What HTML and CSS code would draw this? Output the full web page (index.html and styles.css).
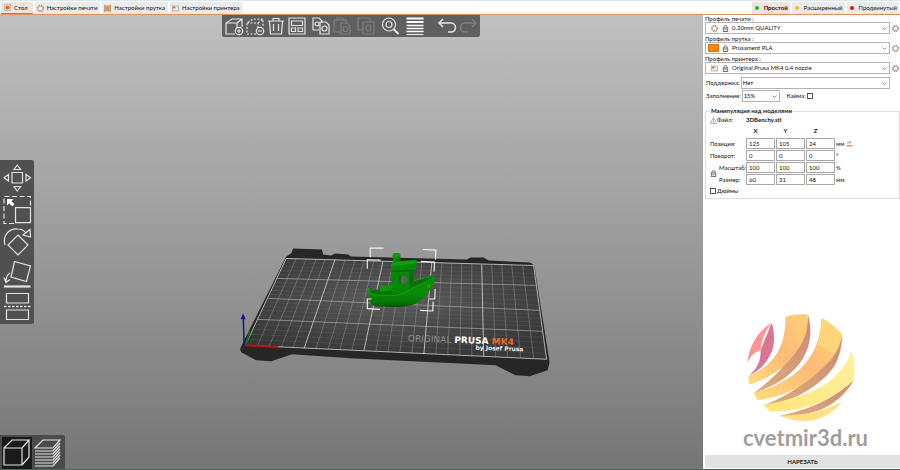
FILE: index.html
```
<!DOCTYPE html>
<html lang="ru">
<head>
<meta charset="utf-8">
<title>Стол</title>
<link rel="stylesheet" href="styles.css">
</head>
<body>
<svg class="defs" aria-hidden="true">
  <defs>
    <symbol id="gear" viewBox="1 1 10 10"><circle cx="6" cy="6" r="4.200" fill="none" stroke="#857b76" stroke-width="1.600" stroke-dasharray="2 1.300"/><circle cx="6" cy="6" r="3.300" fill="#fff" stroke="#d6ab94" stroke-width="1.500"/></symbol>
    <symbol id="lock" viewBox="0 0 12 14"><path d="M3 6V4a3 3 0 0 1 6 0v2" fill="none" stroke="#666" stroke-width="1.7"/><rect x="1.5" y="6" width="9" height="7" fill="#f2f2f2" stroke="#555" stroke-width="1.6"/><path d="M4 9.5h4" stroke="#555" stroke-width="1.4"/></symbol>
    <symbol id="printer" viewBox="0 0 14 12"><rect x="1" y="1" width="12" height="10" fill="#fff" stroke="#777"/><path d="M1 3.5h12M1 9h12" stroke="#aaa"/><rect x="2" y="2" width="5" height="4" fill="#ed6b21"/></symbol>
    <symbol id="chevron" viewBox="0 0 10 6"><path d="M1 1l4 4 4-4" fill="none" stroke="#555" stroke-width="1.3"/></symbol>
  </defs>
</svg>
<header class="topbar">
  <nav class="tabs">
    <button class="tab tab-active"><svg class="icon" viewBox="0 0 12 12"><rect x="1" y="1" width="10" height="10" fill="#f9e5da" stroke="#a99"/><circle cx="6" cy="6" r="3.500" fill="#f26413"/></svg>Стол</button>
    <button class="tab"><svg class="icon"><use href="#gear"/></svg>Настройки печати</button>
    <button class="tab"><svg class="icon" viewBox="0 0 12 12"><path d="M1.5 0v12M10.500 0v12" stroke="#888" stroke-width="2"/><rect x="2.500" y="1" width="7" height="10" fill="#f58a3c"/></svg>Настройки прутка</button>
    <button class="tab"><svg class="icon"><use href="#printer"/></svg>Настройки принтера</button>
  </nav>
  <div class="modes">
    <button class="mode mode-active"><span class="dot green"></span>Простой</button>
    <button class="mode"><span class="dot yellow"></span>Расширенный</button>
    <button class="mode"><span class="dot red"></span>Продвинутый</button>
  </div>
</header>
<main class="workspace">
  <section class="viewport">
    <svg class="scene" viewBox="0 15 703 455" preserveAspectRatio="xMidYMid meet">
      <defs>
        <radialGradient id="sheet" cx=".5" cy=".4" r=".6"><stop offset="0" stop-color="#5c5c5c"/><stop offset=".6" stop-color="#454545"/><stop offset="1" stop-color="#383838"/></radialGradient>
        <linearGradient id="hull" x1="0" y1="0" x2="0" y2="1"><stop offset="0" stop-color="#0a8f0a"/><stop offset=".55" stop-color="#088c08"/><stop offset=".85" stop-color="#067406"/><stop offset="1" stop-color="#034f03"/></linearGradient>
      </defs>
      <path fill="#262626" d="M286 257l5-3 2-5 29 1 1 5 8 1 4-2 13 1 3 2 116 3 4-2 13 0 5 3 41 2q4 1 5 5l15 95-2 8-18 6-14-1-20-10-145-7-59-4-21 7-15-1-15-8q-2-3 0-6z"/>
      <path fill="url(#sheet)" d="M286 259L534 266 547 360 245 346z"/>
      <path fill="none" stroke="#a0a0a0" stroke-opacity=".18" stroke-width=".7" d="M284 263L535 270M282 267L535 274M280 271L536 278M278 275L536 282M275 283L537 291M273 287L538 296M271 291L539 301M269 295L539 306M265 303L541 315M263 307L541 319M261 311L542 323M259 316L543 327M255 325L544 338M253 330L545 343M250 335L546 349M248 340L546 354"/>
      <path fill="none" stroke="#c0c0c0" stroke-opacity=".38" stroke-width=".8" d="M296 259L257 347M306 260L269 347M316 260L281 348M325 260L293 348M345 261L316 349M355 261L328 350M364 261L340 350M374 261L352 351M393 262L376 352M403 262L388 353M412 262L400 353M422 263L412 354M442 263L436 355M452 264L448 355M462 264L460 356M472 264L472 357M492 265L496 358M502 265L508 358M512 265L521 359M523 266L534 359"/>
      <path fill="none" stroke="#d0d0d0" stroke-opacity=".5" d="M277 279L536 286M268 299L540 311M257 320L543 332"/>
      <path fill="none" stroke="#ddd" stroke-opacity=".75" d="M286 259L245 346 547 360 534 266zM335 260L304 349M383 262L364 351M432 263L424 355M482 265L484 357"/>
      <g class="plate-text" transform="rotate(2 408 341)"><text x="408" y="342"><tspan fill="#8d8d8d" font-weight="400">ORIGINAL</tspan> <tspan fill="#fff">PRUSA</tspan> <tspan fill="#ec6a1e">MK4</tspan></text><text class="plate-small" x="476" y="348">by Josef Prusa</text></g>
      <path d="M245 346l5-14" stroke="#087508" stroke-width="2"/><path d="M245 346l33 2" stroke="#b3120f" stroke-width="2"/><path d="M244 346l-1-27" stroke="#15158c" stroke-width="1.500"/><path d="M240.500 320l2.300-6 2.700 6z" fill="#15158c"/>
      <g transform="translate(350 240) scale(.3333)">
        <path fill="#077007" d="M57 142L66 152 92 150 95 138 126 136 192 126 246 108 255 114 250 130 200 160 90 175 57 165z"/>
        <path fill="#088808" d="M124 96V78L129 66V45Q139 38 151 45V65L200 62V82L196 94 191 98V142L178 158 126 164z"/>
        <path fill="#0aa00a" d="M122 78L130 68 200 62 196 73 124 80z"/>
        <path fill="#0a9a0a" d="M128 43Q139 38 151 43V53Q139 58 128 53zM88 152L95 138 126 137V153L96 156z"/>
        <path fill="#067006" d="M124 93L196 90 194 97 126 98zM177 98L191 97V142L178 152zM143 54L151 53V66H143z"/>
        <path fill="#606060" d="M147 133V118Q148 107 158 107 170 108 171 122V130Q160 136 147 133z"/>
        <path fill="#077507" d="M147 133V118Q148 107 158 107 153 112 153 120V134z"/>
        <path fill="url(#hull)" d="M54 146L60 144 63 160 75 166 134 167 170 158 194 143 246 121 255 113 253 130Q242 154 223 174 205 192 184 198 165 203 138 203L72 200Q59 190 57 180z"/>
        <path fill="none" stroke="#10a510" stroke-width="2.500" d="M55 145L60 161 74 167 134 168Q160 165 194 143L254 114M192 124L246 109 254 114"/>
        <circle cx="236" cy="141" r="5" fill="#20b520"/><circle cx="235" cy="142" r="2.500" fill="#067006"/>
        <path fill="none" stroke="#f2f2f2" stroke-width="3.500" d="M61 53V26h40M219 30l39 2-1 29M52 88V61l40 1M213 66l41 2-1 29M52 179v29l38 2M51 179h14M256 149l-1 30h-17M250 187l-1 28-38-2"/>
      </g>
    </svg>
    <div class="toolbar toolbar-top">
      <div class="group">
        <button aria-label="Добавить"><svg viewBox="0 0 20 20"><path d="M11 18H2V7l6-4h10v8M2 7h11v5M13 7l5-4"/><circle cx="15" cy="15" r="3.700"/><path d="M13 15h4M15 13v4"/></svg></button>
        <button aria-label="Удалить"><svg viewBox="0 0 20 20"><path stroke-dasharray="2 1.500" d="M11 18H2V7l6-4h10v8M2 7h11v5M13 7l5-4"/><circle cx="15" cy="15" r="3.700"/><path d="M13 15h4"/></svg></button>
        <button aria-label="Удалить все"><svg viewBox="0 0 20 20"><path d="M2 5h16M7 5V2.500h6V5M3.500 5l1 13h11l1-13M7.500 8v7M12.500 8v7"/></svg></button>
        <button aria-label="Расставить"><svg viewBox="0 0 20 20"><path d="M2 2h16v16H2zM4.500 5h11v4.500h-11zM4.500 12h4v3.500h-4zM11 12h4.500v3.500H11z"/></svg></button>
      </div>
      <div class="group">
        <button aria-label="Копировать"><svg viewBox="0 0 20 20"><path d="M8 14H2V2h6l3 3v2M9 6h6l3 3v9H9z"/><circle cx="6" cy="8" r="2"/><circle cx="13.500" cy="12.500" r="2.500"/></svg></button>
        <button disabled aria-label="Вставить"><svg viewBox="0 0 20 20"><path d="M9 16H2V4h12v3M5 4V2h6v2M9 7h6l3 3v8H9z"/><circle cx="13.500" cy="13" r="2.500"/></svg></button>
      </div>
      <div class="group"><button disabled aria-label="Экземпляр"><svg viewBox="0 0 20 20"><path d="M7 14H2V2h12v4M7 6h11v12H7z"/><rect x="10.500" y="9" width="4" height="6" rx="1"/></svg></button></div>
      <div class="group"><button aria-label="Поиск"><svg viewBox="0 0 20 20"><circle cx="9" cy="8.500" r="6.500"/><circle cx="9" cy="8.500" r="3"/><path stroke-width="2" d="M13.500 13l5 5"/></svg></button></div>
      <div class="group"><button aria-label="Высота слоя"><svg viewBox="0 0 20 20"><path stroke="#fff" stroke-width="2.200" d="M2.500 2.500h17M2.500 6h17"/><path stroke="#fff" stroke-width="1.600" d="M2.500 9.500h17M2.500 12.500h17M2.500 15.500h17"/><path d="M2.500 18.500h17"/></svg></button></div>
      <div class="group history">
        <button aria-label="Отменить"><svg viewBox="0 0 20 20"><path stroke-width="1.500" d="M6 3L2 7l4 4M2 7h12a4.500 4.500 0 0 1 0 9h-3"/></svg></button>
        <button disabled aria-label="Повторить"><svg viewBox="0 0 20 20"><path stroke-width="1.500" d="M14 3l4 4-4 4M18 7H7a4.500 4.500 0 0 0 0 9h3"/></svg></button>
      </div>
    </div>
    <div class="toolbar toolbar-left">
      <button aria-label="Перемещение"><svg viewBox="0 0 34 32"><path d="M12 11.500h10.500v10.500H12zM17.300 4l3.300 4.500h-6.600zM17.300 30l3.300-4.500h-6.600zM4 16.700l4.500-3.300v6.600zM30.500 16.700l-4.500-3.300v6.600z"/></svg></button>
      <button aria-label="Масштаб"><svg viewBox="0 0 34 32"><path stroke-dasharray="5 2.500" d="M14 30.500H4v-27h26.500V14"/><path d="M15.500 14.700h15v15h-15z"/><path fill="#fff" stroke="none" d="M7 6h6.500l-2 2.200 3 2.800-2.200 2.200-3-2.800L7 12.500z"/></svg></button>
      <button aria-label="Поворот"><svg viewBox="0 0 34 32"><path d="M5 20C2 10 10 3 18 4q5 0 8 4M30 4.500l.5 7.500-7.500-2z"/><path d="M18 10l10 10-10 10L8 20z"/></svg></button>
      <button aria-label="На поверхность"><svg viewBox="0 0 34 32"><path d="M14.500 4.500L30.500 9l-4 15.500L11 20zM10 16q-4 2-4 9M4 20.500l2 5 4-3"/><path stroke-width="2.200" d="M4 29.500h26.500"/></svg></button>
      <button aria-label="Разрез"><svg viewBox="0 0 34 32"><path d="M6.500 4.500h22V14h-22zM6.500 21h22v9.500h-22z"/><path stroke-dasharray="2.500 1.500" stroke-width="1.600" d="M4 17.500h27"/></svg></button>
    </div>
    <div class="toolbar toolbar-bottom">
      <button class="view-active" aria-label="Модель"><svg viewBox="0 0 30 32"><path d="M2 11h18v17H2zM2 11l8-8h17l-7 8M27 3v17l-7 8"/></svg></button>
      <button aria-label="Слои"><svg viewBox="0 0 30 32"><path d="M2 11l8-8h17l-7 8zM2 14h18l7-8M2 17h18l7-8M2 20h18l7-8M2 23h18l7-8M2 26h18l7-8M2 29h18l7-8"/></svg></button>
    </div>
  </section>
  <aside class="panel">
    <div class="profile"><label for="print">Профиль печати :</label>
      <div class="line"><div class="combo"><svg class="icon lead"><use href="#gear"/></svg><svg class="icon"><use href="#lock"/></svg><select id="print"><option>0.20mm QUALITY</option></select><svg class="chev"><use href="#chevron"/></svg></div><button class="gear" aria-label="Настроить печать"><svg class="icon"><use href="#gear"/></svg></button></div></div>
    <div class="profile"><label for="filament">Профиль прутка :</label>
      <div class="line"><div class="combo"><span class="swatch"></span><svg class="icon"><use href="#lock"/></svg><select id="filament"><option>Prusament PLA</option></select><svg class="chev"><use href="#chevron"/></svg></div><button class="gear" aria-label="Настроить пруток"><svg class="icon"><use href="#gear"/></svg></button></div></div>
    <div class="profile"><label for="machine">Профиль принтера :</label>
      <div class="line"><div class="combo"><svg class="icon lead"><use href="#printer"/></svg><svg class="icon"><use href="#lock"/></svg><select id="machine"><option>Original Prusa MK4 0.4 nozzle</option></select><svg class="chev"><use href="#chevron"/></svg></div><button class="gear" aria-label="Настроить принтер"><svg class="icon"><use href="#gear"/></svg></button></div></div>
    <div class="option support"><label for="support">Поддержка:</label><div class="combo"><select id="support"><option>Нет</option></select><svg class="chev"><use href="#chevron"/></svg></div></div>
    <div class="option"><label for="infill">Заполнение:</label><div class="combo short"><select id="infill"><option>15%</option></select><svg class="chev"><use href="#chevron"/></svg></div><label class="check brim">Кайма:<input type="checkbox"></label></div>
    <fieldset class="object">
      <legend>Манипуляция над моделями</legend>
      <div class="file"><span class="file-label"><svg class="icon" viewBox="0 0 12 12"><path d="M6 1l5.500 10H.5zM6 4v4M6 9v1" fill="none" stroke="#777"/></svg>Файл:</span><b>3DBenchy.stl</b></div>
      <div class="grid">
        <b class="axis x">X</b><b class="axis">Y</b><b class="axis">Z</b>
        <span class="name wide">Позиция:</span><input aria-label="Позиция X" value="125"><input aria-label="Позиция Y" value="105"><input aria-label="Позиция Z" value="24"><span class="unit">мм <svg class="icon" viewBox="0 0 12 12"><path d="M3 7V4h5M6 1l3 3-3 2" fill="none" stroke="#777"/><path d="M1 10h10" stroke="#ed6b21" stroke-width="2"/></svg></span>
        <span class="name wide">Поворот:</span><input aria-label="Поворот X" value="0"><input aria-label="Поворот Y" value="0"><input aria-label="Поворот Z" value="0"><span class="unit">°</span>
        <svg class="icon ratio"><use href="#lock"/></svg>
        <span class="name">Масштаб:</span><input aria-label="Масштаб X" value="100"><input aria-label="Масштаб Y" value="100"><input aria-label="Масштаб Z" value="100"><span class="unit">%</span>
        <span class="name">Размер:</span><input aria-label="Размер X" value="60"><input aria-label="Размер Y" value="31"><input aria-label="Размер Z" value="48"><span class="unit">мм</span>
      </div>
      <label class="check"><input type="checkbox">Дюймы</label>
    </fieldset>
    <div class="brand">
      <svg viewBox="35 20 330 330">
        <defs>
          <linearGradient id="a" x1="0" y1="1" x2="1" y2="0"><stop offset="0" stop-color="#ffdc78"/><stop offset=".5" stop-color="#fdbb78"/><stop offset="1" stop-color="#fdd077"/></linearGradient>
          <linearGradient id="b" x1="0" y1="1" x2="1" y2="0"><stop offset="0" stop-color="#e0ad78"/><stop offset="1" stop-color="#ca8b77"/></linearGradient>
          <linearGradient id="c" x1="0" y1="1" x2="1" y2="0"><stop offset="0" stop-color="#ffe679"/><stop offset="1" stop-color="#fff19d"/></linearGradient>
          <linearGradient id="d" x1="0" y1="0" x2="0" y2="1"><stop offset="0" stop-color="#d9758e"/><stop offset="1" stop-color="#d8779a"/></linearGradient>
        </defs>
        <path fill="url(#d)" d="M112 53C122 84 121 116 112 140 96 175 73 198 45 210 70 187 79 168 79 134z"/>
        <path fill="#fe9494" d="M112 53C75 73 44 119 39 174 47 155 60 140 79 134 81 103 93 75 112 53z"/>
        <path fill="url(#b)" d="M221 28C235 77 228 122 205 161 173 210 130 238 59 263 130 210 205 135 221 28z"/>
        <path fill="url(#a)" d="M153 35C176 27 198 26 221 28 221 78 211 104 190 133 160 178 120 212 47 238 43 229 41 220 42 212 105 188 155 138 153 35z"/>
        <path fill="url(#b)" d="M324 88C321 142 310 179 275 213 223 262 167 290 86 301 190 260 265 200 324 88z"/>
        <path fill="url(#a)" d="M261 39C285 48 309 72 324 88 312 138 297 158 267 186 220 234 158 275 70 284L58 262C150 240 258 180 261 39z"/>
        <path fill="#ffe27d" opacity=".5" d="M261 39C285 48 309 72 324 88 320 112 311 133 299 147L250 117C257 95 261 68 261 39z"/>
        <path fill="url(#b)" d="M358 225C330 274 286 313 212 327 184 333 161 335 135 332 240 310 303 274 358 225z"/>
        <path fill="url(#c)" d="M352 138C361 167 363 196 358 225 302 274 225 320 108 319L86 300C203 276 307 250 352 138z"/>
        <path fill="#ffe083" d="M323 290C274 349 204 362 135 331 188 331 258 323 323 290z"/>
      </svg>
      <div class="brand-name">cvetmir3d.ru</div>
    </div>
    <button class="slice">НАРЕЗАТЬ</button>
  </aside>
</main>
</body>
</html>
```
FILE: styles.css
```
* { box-sizing: border-box; }
body {
  margin: 0;
  height: 100vh;
  display: flex;
  flex-direction: column;
  font: 6px/8px Lato, "Open Sans", sans-serif;
  color: #111;
  background: #fff;
  border-bottom: 1px solid #52606a;
}
button, input, select { font: inherit; color: inherit; }
button { border: 0; padding: 0; background: none; }
.defs { position: absolute; width: 0; height: 0; }
.icon { width: 7px; height: 7px; flex: none; display: block; }

.topbar {
  display: flex;
  justify-content: space-between;
  height: 15px;
  padding: 1px 1px 0;
  border-top: 1px solid #d5e9ee;
  border-bottom: 1px solid #e2925f;
}
.tabs, .modes { display: flex; gap: 2px; }
.tab, .mode {
  display: flex;
  align-items: center;
  gap: 3px;
  padding: 0 3px 0 2px;
  background: #ebebeb;
}
.tab-active { padding: 0 5px 0 3px; background: #f1e2da; border-bottom: 1px solid #ed6b21; }
.mode-active { background: #f1e4de; font-weight: 700; }
.mode { gap: 5px; padding: 0 2px 0 3px; }
.dot { width: 4px; height: 4px; border-radius: 50%; }
.green { background: #00c800; }
.yellow { background: #fcbd0c; }
.red { background: #f00808; }

.workspace { flex: 1; min-height: 0; display: grid; grid-template-columns: 1fr 197px; }
.viewport { position: relative; overflow: hidden; background: linear-gradient(#c0c0c0, #767676); }
.scene { display: block; width: 100%; height: 100%; }
.plate-text { font: 700 9px "DejaVu Sans", sans-serif; }
.plate-small { font-size: 6px; fill: #eee; }

.toolbar { position: absolute; display: flex; background: #5f5f5f; }
.toolbar svg { display: block; width: 100%; height: 100%; fill: none; stroke: #e4e4e4; stroke-width: 1.2; }
.toolbar-top { top: 0; left: 222px; gap: 4px; padding: 1px 2px; border-radius: 0 0 2px 2px; }
.group { display: flex; gap: 1px; }
.group button { width: 20px; height: 20px; }
.group button:disabled svg { stroke: #7e7e7e; }
.history { margin-left: 9px; }
.toolbar-left { left: 0; top: 50%; transform: translateY(-50%); flex-direction: column; padding: 1px 0 3px; background: #505050; border-radius: 0 2px 2px 0; }
.toolbar-left button { width: 34px; height: 32px; }
.toolbar-bottom { left: 0; bottom: 0; gap: 1px; padding: 2px 2px 0; background: #4b4b4b; border-radius: 0 2px 0 0; }
.toolbar-bottom button { width: 30px; height: 32px; }
.view-active { background: #1a1a1a; }

.panel { display: flex; flex-direction: column; padding: 0 0 1px 2px; background: #fff; }
.profile { margin-bottom: 1px; }
.profile > label { display: block; line-height: 7px; }
.line { display: flex; align-items: center; gap: 2px; padding-right: 1px; }
.combo { display: flex; align-items: center; gap: 3px; flex: 1; height: 12px; padding: 0 2px; border: 1px solid #b4b4b4; background: #fff; }
.combo select { flex: 1; min-width: 0; height: 10px; padding: 0; border: 0; background: none; appearance: none; }
.lead { margin: 0 1px 0 3px; }
.swatch { width: 11px; height: 8px; background: #ff8500; border: 1px solid #c67a28; }
.chev { width: 5px; height: 3px; flex: none; }
.option { display: flex; align-items: center; margin-top: 1px; gap: 1px; padding: 0 10px 0 1px; }
.support { margin-top: 2px; }
.support .combo, .short { padding-left: 1px; }
.short { flex: none; width: 38px; }
.check { display: flex; align-items: center; gap: 1px; }
.check input { appearance: none; width: 6px; height: 6px; margin: 0; border: 1px solid #555; background: #fff; }
.brim { margin-left: 6px; }

.object { margin: 5px 0 0; padding: 1px 0 3px 4px; border: 1px solid #ddd; min-width: 0; }
.object legend { padding: 0 1px; font-weight: 700; }
.file { display: grid; grid-template-columns: 36px 1fr; color: #111; }
.file-label { display: flex; align-items: center; }
.grid { display: grid; grid-template-columns: 8px 26px 29px 29px 29px 1fr; column-gap: 1px; row-gap: 1px; align-items: center; }
.axis { height: 13px; line-height: 13px; text-align: center; padding-right: 10px; }
.x { grid-column: 3; }
.name { line-height: 11px; white-space: nowrap; }
.wide { grid-column: 1 / 3; }
.grid input { width: 100%; height: 11px; padding: 0 2px 1px; border: 1px solid #a8a8a8; background: #fff; }
.unit { display: flex; gap: 2px; }
.ratio { grid-row: 4 / 6; }
.object .check { margin-top: 2px; }

.brand { margin: auto 20px 2px 38px; }
.brand svg { display: block; width: 110px; height: 110px; margin-left: 3px; }
.brand-name { font: 700 22px/31px Lato, sans-serif; color: #a29d9d; }
.slice { height: 13px; background: #e2e2e2; font-weight: 700; text-align: center; }
```
